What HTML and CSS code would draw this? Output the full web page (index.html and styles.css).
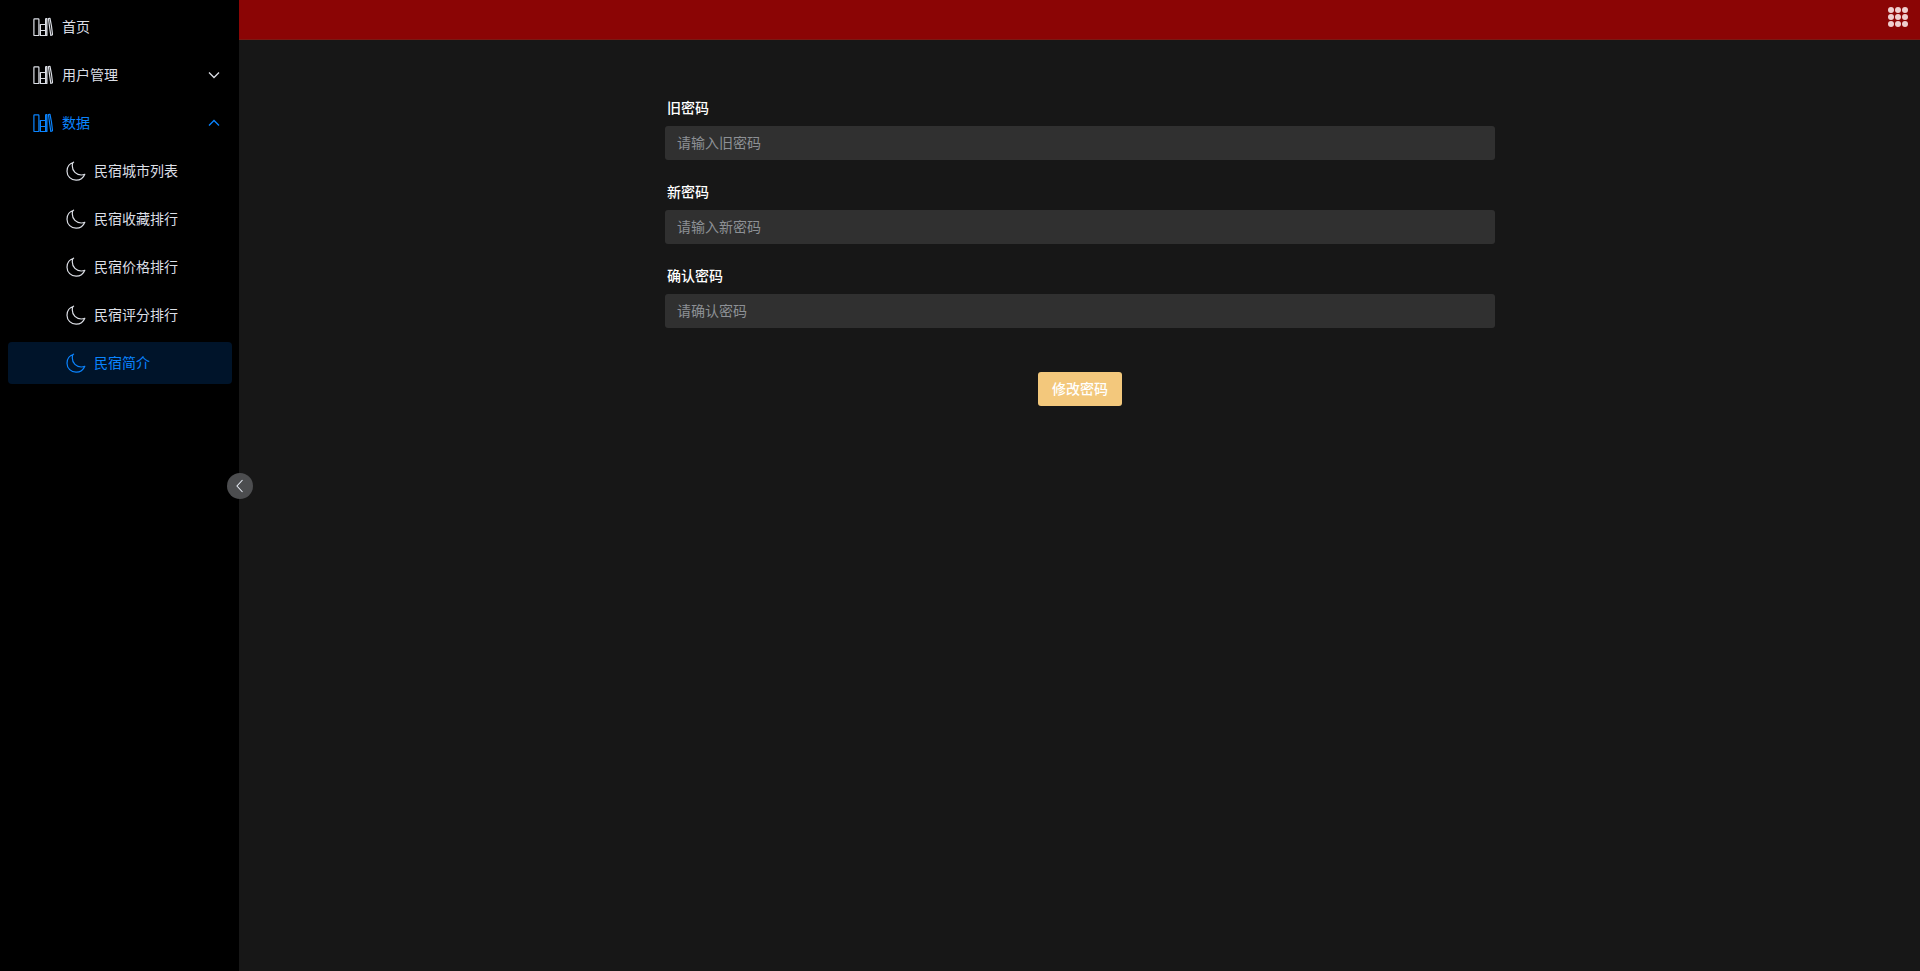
FILE: index.html
```html
<!DOCTYPE html>
<html lang="zh">
<head>
<meta charset="utf-8">
<title>修改密码</title>
<link rel="stylesheet" href="styles.css">
</head>
<body>
<svg class="defs" width="0" height="0" aria-hidden="true">
  <symbol id="books" viewBox="0 0 20 20">
    <path d="M1.500 1.800h3.800a.6.600 0 0 1 .6.600v15.500a.6.600 0 0 1-.6.600H1.500a.6.600 0 0 1-.6-.6V2.400a.6.600 0 0 1 .6-.6zM7.400 7.500h5.200v11H7.400zM7.400 13.500h5.200M12.600 1.500v17M12.600 1.500h1.500M13.900 1.500v17h-1.300M15.400 1.500l1.600-.2c.5 2.200 2.200 12.800 2.500 16.500l-1.700.7c-.5-3.200-2-14.300-2.400-17z" fill="none" stroke="currentColor" stroke-width="1.200" stroke-linejoin="round"/>
  </symbol>
  <symbol id="moon" viewBox="0 0 20 20">
    <path d="M7.600 1.200C3.700 2.400 1 6 1 10.200c0 5.100 4.100 9 9.100 9 3.900 0 7.300-2.400 8.700-5.900-1.100.5-2.300.7-3.500.7-5 0-9-4-9-9 0-1.100.1-2 .3-2.800z" fill="none" stroke="currentColor" stroke-width="1.200" stroke-linejoin="round"/>
  </symbol>
</svg>
<div class="app">
  <aside class="sidebar">
    <ul class="menu">
      <li class="item"><svg class="ico-book"><use href="#books"/></svg><span class="label">首页</span></li>
      <li class="item"><svg class="ico-book"><use href="#books"/></svg><span class="label">用户管理</span><svg class="chev" viewBox="0 0 12 8"><path d="M1 1.500l5 5 5-5" fill="none" stroke="currentColor" stroke-width="1.300"/></svg></li>
      <li class="item open"><svg class="ico-book"><use href="#books"/></svg><span class="label">数据</span><svg class="chev" viewBox="0 0 12 8"><path d="M1 6.500l5-5 5 5" fill="none" stroke="currentColor" stroke-width="1.300"/></svg></li>
      <li class="item sub"><svg class="ico-moon"><use href="#moon"/></svg><span class="label">民宿城市列表</span></li>
      <li class="item sub"><svg class="ico-moon"><use href="#moon"/></svg><span class="label">民宿收藏排行</span></li>
      <li class="item sub"><svg class="ico-moon"><use href="#moon"/></svg><span class="label">民宿价格排行</span></li>
      <li class="item sub"><svg class="ico-moon"><use href="#moon"/></svg><span class="label">民宿评分排行</span></li>
      <li class="item sub active"><svg class="ico-moon"><use href="#moon"/></svg><span class="label">民宿简介</span></li>
    </ul>
    <button class="collapse" type="button" aria-label="收起"><svg viewBox="0 0 8 14"><path d="M6.500 1L1 7l5.500 6" fill="none" stroke="currentColor" stroke-width="1.100"/></svg></button>
  </aside>
  <div class="main">
    <header class="topbar">
      <div class="grid-btn"><i></i><i></i><i></i><i></i><i></i><i></i><i></i><i></i><i></i></div>
    </header>
    <form class="form">
      <div class="field"><label class="field-label">旧密码</label><input class="input" type="password" placeholder="请输入旧密码"></div>
      <div class="field"><label class="field-label">新密码</label><input class="input" type="password" placeholder="请输入新密码"></div>
      <div class="field"><label class="field-label">确认密码</label><input class="input" type="password" placeholder="请确认密码"></div>
      <div class="actions"><button class="submit" type="button">修改密码</button></div>
    </form>
  </div>
</div>
</body>
</html>
```
FILE: styles.css
```css
* { box-sizing: border-box; }
html, body { margin: 0; height: 100%; }
body {
  background: #171717;
  color: #e5eaf3;
  font-family: "Noto Sans CJK SC", "Noto Sans", sans-serif;
  font-size: 14px;
  overflow: hidden;
}
.defs { position: absolute; }
.app { display: flex; height: 971px; }

.sidebar { position: relative; flex: 0 0 239px; background: #000; }
.menu { list-style: none; margin: 0; padding: 6px 0 0; }
.item {
  display: flex;
  align-items: center;
  height: 42px;
  margin: 0 7px 6px 8px;
  padding-left: 25px;
  padding-right: 11px;
  border-radius: 4px;
  color: #dcdfe6;
}
.ico-book { width: 20px; height: 20px; margin-right: 9px; flex: none; }
.ico-moon { width: 20px; height: 20px; margin-right: 8px; flex: none; }
.label { flex: 1; line-height: 20px; position: relative; top: -1px; }
.chev { width: 12px; height: 8px; flex: none; margin-right: 1px; }
.item.open { color: #0a84ff; }
.item.sub { padding-left: 58px; }
.item.active { background: #00142a; color: #0a84ff; }

.collapse {
  position: absolute;
  left: 227px;
  top: 473px;
  width: 26px;
  height: 26px;
  padding: 0;
  border: 0;
  border-radius: 50%;
  background: #4c4d4f;
  color: #e5eaf3;
  display: flex;
  align-items: center;
  justify-content: center;
}
.collapse svg { width: 8px; height: 14px; }

.main { flex: 1; min-width: 0; }
.topbar {
  height: 40px;
  background: #8b0505;
  border-bottom: 1px solid #7a1a14;
  display: flex;
  justify-content: flex-end;
  padding: 7px 12px 0 0;
}
.grid-btn { display: grid; grid-template-columns: repeat(3, 6px); grid-auto-rows: 6px; gap: 1px; align-content: start; }
.grid-btn i { background: #efcfcf; border-radius: 50%; }

.form { width: 830px; margin: 58px auto 0; position: relative; left: .5px; }
.field { margin-bottom: 22px; }
.field-label { display: block; height: 20px; line-height: 20px; margin: 0 0 8px 2px; color: #fff; font-weight: 500; position: relative; top: -1px; }
.input {
  display: block;
  width: 100%;
  height: 34px;
  padding: 0 12px 2px;
  background: #303030;
  border: 0;
  border-radius: 3px;
  color: #fff;
  font: inherit;
  outline: 0;
}
.input::placeholder { color: #8d9095; opacity: 1; }
.actions { display: flex; justify-content: center; padding-top: 22px; }
.submit {
  width: 84px;
  height: 34px;
  padding: 0 0 2px;
  background: #f3c87c;
  border: 0;
  border-radius: 3px;
  color: #fff;
  font: inherit;
  font-weight: 500;
}
```
